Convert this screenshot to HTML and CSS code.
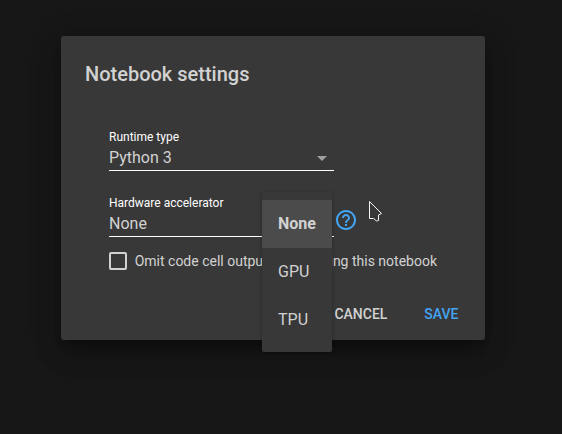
FILE: index.html
```html
<!DOCTYPE html>
<html lang="en">
<head>
<meta charset="utf-8">
<title>Notebook settings</title>
<link rel="stylesheet" href="styles.css">
</head>
<body>
<main class="dialog">
  <h1 class="title">Notebook settings</h1>
  <form class="content">
    <div class="field">
      <label class="label">Runtime type</label>
      <div class="select"><span>Python 3</span><svg class="arrow" width="10" height="5" viewBox="0 0 10 5"><path d="M0 0h10L5 5z" fill="#a0a0a0"/></svg></div>
    </div>
    <div class="row">
      <div class="field">
        <label class="label">Hardware accelerator</label>
        <div class="select"><span>None</span></div>
        <ul class="menu">
          <li class="item selected">None</li>
          <li class="item">GPU</li>
          <li class="item">TPU</li>
        </ul>
      </div>
      <svg class="help" width="24" height="24" viewBox="0 0 24 24"><path fill="#42a5f5" d="M11 18h2v-2h-2v2zm1-16C6.48 2 2 6.48 2 12s4.480 10 10 10 10-4.480 10-10S17.520 2 12 2zm0 18c-4.410 0-8-3.590-8-8s3.590-8 8-8 8 3.590 8 8-3.590 8-8 8zm0-14c-2.210 0-4 1.790-4 4h2c0-1.100.9-2 2-2s2 .9 2 2c0 2-3 1.750-3 5h2c0-2.250 3-2.500 3-5 0-2.210-1.790-4-4-4z"/></svg>
    </div>
    <div class="check"><span class="box"></span><span>Omit code cell output when saving this notebook</span></div>
  </form>
  <footer class="actions"><span>CANCEL</span><span class="save">SAVE</span></footer>
</main>
<svg class="cursor" width="16" height="24" viewBox="0 0 16 24"><path d="M1.500 1.500V18.500L5.500 18.500L8.500 21L10.500 20.500V15L13.500 13.500z" fill="#383838" stroke="#f5f5f5" stroke-width="1"/></svg>
</body>
</html>
```
FILE: styles.css
```css
* { box-sizing: border-box; }
body {
  margin: 0;
  width: 562px;
  height: 434px;
  padding: 36px 0 0 61px;
  overflow: hidden;
  background: #171717;
  color: #d2d2d2;
  font-family: Roboto, sans-serif;
}
.dialog {
  display: flex;
  flex-direction: column;
  width: 424px;
  height: 304px;
  padding: 24px 24px 8px;
  border-radius: 3px;
  background: #383838;
  box-shadow: 0 16px 24px 2px rgba(0,0,0,.14), 0 6px 30px 5px rgba(0,0,0,.12), 0 8px 10px -5px rgba(0,0,0,.4);
}
.title { margin: 0; font-size: 20px; font-weight: 500; line-height: 28px; }
.content { padding: 41px 24px 0; }
.field { position: relative; width: 225px; height: 42px; border-bottom: 1px solid #fff; }
.label { display: block; font-size: 12px; line-height: 16px; color: #fff; }
.select { display: flex; align-items: center; justify-content: space-between; margin-top: 1px; padding-right: 7px; font-size: 16px; line-height: 24px; }
.row { display: flex; margin-top: 24px; }
.help { margin: 13px 0 0; }
.menu {
  position: absolute;
  top: -3px;
  left: 153px;
  width: 70px;
  height: 160px;
  margin: 0;
  padding: 8px 0;
  list-style: none;
  border-radius: 2px;
  background: #383838;
  box-shadow: 0 1px 4px rgba(0,0,0,.3);
}
.item { padding-left: 16px; font-size: 16px; line-height: 48px; }
.selected { background: #4b4b4b; font-weight: 700; }
.check { display: flex; align-items: center; height: 20px; margin-top: 14px; font-size: 14px; white-space: nowrap; }
.box { width: 18px; height: 18px; margin-right: 8px; border: 2px solid #d2d2d2; border-radius: 2px; }
.actions { display: flex; justify-content: flex-end; gap: 37px; margin-top: auto; padding-right: 2.5px; font-size: 14px; font-weight: 500; line-height: 36px; }
.save { color: #42a5f5; }
.cursor { position: absolute; left: 368px; top: 200px; }
```
